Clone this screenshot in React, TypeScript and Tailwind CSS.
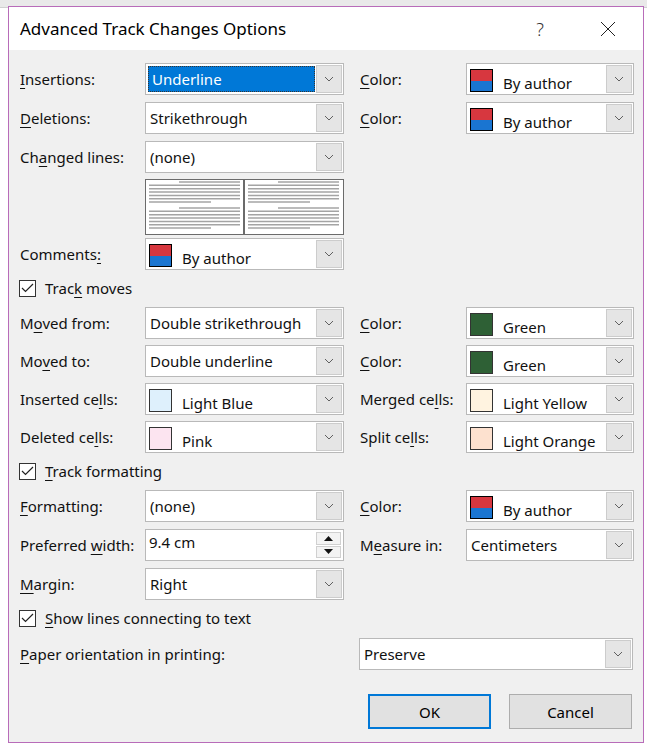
import React from "react";

const swatches: Record<string, string> = {
  green: "#2e6035",
  lightBlue: "#def0fc",
  pink: "#fce4f0",
  lightYellow: "#fff3e0",
  lightOrange: "#fde1cf",
};

function Acc({ t }: { t: string }) {
  const i = t.indexOf("&");
  if (i < 0) return <>{t}</>;
  return (
    <>
      {t.slice(0, i)}
      <span className="underline underline-offset-[3px] decoration-1">{t[i + 1]}</span>
      {t.slice(i + 2)}
    </>
  );
}

function Chevron() {
  return (
    <svg width="10" height="6" viewBox="0 0 10 6" fill="none">
      <polyline points="1,1 5,5 9,1" stroke="#606060" strokeWidth="1" />
    </svg>
  );
}

function DropButton() {
  return (
    <div className="w-[26px] self-stretch m-px flex items-center justify-center bg-[#e5e5e5] border border-[#cccccc]">
      <Chevron />
    </div>
  );
}

function Swatch({ color }: { color?: string }) {
  if (!color) {
    return (
      <div className="w-[23px] h-[23px] ml-[2px] mt-[3px] border border-black flex flex-col shrink-0">
        <div className="flex-1 bg-[#d7373f]" />
        <div className="flex-1 bg-[#1a75d1]" />
      </div>
    );
  }
  return (
    <div
      className="w-[23px] h-[23px] ml-[2px] mt-[3px] border border-[#333] shrink-0"
      style={{ backgroundColor: color }}
    />
  );
}

function Combo({
  value,
  w,
  selected,
  swatch,
  author,
}: {
  value: string;
  w: string;
  selected?: boolean;
  swatch?: string;
  author?: boolean;
}) {
  const hasSwatch = author || swatch;
  return (
    <div className={`${w} h-[32px] flex bg-white border border-[#b9b9b9] shrink-0`}>
      <div className="flex-1 flex items-center pl-[1px] min-w-0">
        {hasSwatch ? (
          <>
            <Swatch color={swatch} />
            <span className="ml-[10px] mt-[7px]">{value}</span>
          </>
        ) : selected ? (
          <div className="flex-1 h-[26px] ml-[1px] flex items-center pl-[3px] bg-[#0078d7] text-white border border-dotted border-[#333]">
            {value}
          </div>
        ) : (
          <span className="pl-[3px]">{value}</span>
        )}
      </div>
      <DropButton />
    </div>
  );
}

function Spinner({ value, w }: { value: string; w: string }) {
  return (
    <div className={`${w} h-[32px] flex bg-white border border-[#b9b9b9] shrink-0`}>
      <div className="flex-1 pl-[3px] pt-[2px]">{value}</div>
      <div className="w-[25px] flex flex-col my-[2px] mr-[2px] gap-px">
        <div className="flex-1 flex items-center justify-center bg-[#f3f3f3] border border-[#d0d0d0]">
          <svg width="9" height="5" viewBox="0 0 9 5">
            <polygon points="0,5 4.5,0 9,5" fill="#111" />
          </svg>
        </div>
        <div className="flex-1 flex items-center justify-center bg-[#f3f3f3] border border-[#d0d0d0]">
          <svg width="9" height="5" viewBox="0 0 9 5">
            <polygon points="0,0 4.5,5 9,0" fill="#111" />
          </svg>
        </div>
      </div>
    </div>
  );
}

function Label({ t, w }: { t: string; w: string }) {
  return (
    <div className={`${w} shrink-0 pt-[6px] self-start`}>
      <Acc t={t} />
    </div>
  );
}

function Check({ t, className }: { t: string; className: string }) {
  return (
    <div className={`flex items-center h-[20px] ${className}`}>
      <div className="w-[17px] h-[17px] bg-white border border-[#333] flex items-center justify-center ml-[-1px]">
        <svg width="13" height="10" viewBox="0 0 13 10" fill="none">
          <polyline points="1,5 4.5,8.5 12,1" stroke="#222" strokeWidth="1.2" />
        </svg>
      </div>
      <span className="ml-[9px]">
        <Acc t={t} />
      </span>
    </div>
  );
}

function Preview() {
  const lines: React.ReactNode[] = [];
  [2, 28].forEach((y0, g) => {
    for (let i = 0; i < 7; i++) {
      const y = y0 + i * 3.35;
      const x1 = i === 0 ? 33 : 3;
      const x2 = i === 6 ? 65 : 94;
      lines.push(<line key={`${g}-${i}`} x1={x1} x2={x2} y1={y} y2={y} stroke="#a4a4a4" strokeWidth="1.5" />);
    }
  });
  const pane = (
    <svg width="97" height="53" viewBox="0 0 97 53" className="bg-white">
      {lines}
    </svg>
  );
  return (
    <div className="w-[199px] h-[56px] flex border border-[#6b6b6b] bg-white">
      {pane}
      <div className="w-[2px] bg-[#6b6b6b]" />
      {pane}
    </div>
  );
}

function Row({
  label,
  children,
  right,
  className,
}: {
  label: string;
  children: React.ReactNode;
  right?: React.ReactNode;
  className: string;
}) {
  return (
    <div className={`flex ${className}`}>
      <Label t={label} w="w-[125px]" />
      {children}
      {right}
    </div>
  );
}

function Right({ label, children }: { label: string; children: React.ReactNode }) {
  return (
    <>
      <div className="w-[16px] shrink-0" />
      <Label t={label} w="w-[106px]" />
      {children}
    </>
  );
}

export default function App() {
  const L = "w-[199px]";
  const R = "w-[168px]";
  return (
    <div className="w-[647px] h-[749px] bg-white relative overflow-hidden font-['Noto_Sans',sans-serif] text-[15px] text-[#111] leading-[20px]">
      <div className="h-[8px] bg-[#e9e9e9] border-b border-[#d0d0d0]" />
      <div className="absolute left-[8px] top-[6px] w-[636px] h-[737px] border border-[#b86cb9] bg-[#f0f0f0] flex flex-col">
        <div className="h-[43px] bg-white flex items-center shrink-0">
          <div className="ml-[11px] text-[17px] text-black flex-1">Advanced Track Changes Options</div>
          <div className="w-[20px] text-center text-[18px] text-[#333] mr-[50px] font-light">?</div>
          <svg width="16" height="16" viewBox="0 0 16 16" className="mr-[27px]">
            <path d="M1 1 L15 15 M15 1 L1 15" stroke="#222" strokeWidth="1" />
          </svg>
        </div>
        <div className="pl-[11px] flex flex-col">
          <Row
            label="&Insertions:"
            className="mt-[13px]"
            right={
              <Right label="&Color:">
                <Combo value="By author" w={R} author />
              </Right>
            }
          >
            <Combo value="Underline" w={L} selected />
          </Row>
          <Row
            label="&Deletions:"
            className="mt-[7px]"
            right={
              <Right label="&Color:">
                <Combo value="By author" w={R} author />
              </Right>
            }
          >
            <Combo value="Strikethrough" w={L} />
          </Row>
          <Row label="Ch&anged lines:" className="mt-[7px]">
            <Combo value="(none)" w={L} />
          </Row>
          <div className="ml-[125px] mt-[6px]">
            <Preview />
          </div>
          <Row label="Comments&:" className="mt-[3px]">
            <Combo value="By author" w={L} author />
          </Row>
          <Check t="Trac&k moves" className="mt-[8px]" />
          <Row
            label="M&oved from:"
            className="mt-[9px]"
            right={
              <Right label="&Color:">
                <Combo value="Green" w={R} swatch={swatches.green} />
              </Right>
            }
          >
            <Combo value="Double strikethrough" w={L} />
          </Row>
          <Row
            label="Mo&ved to:"
            className="mt-[6px]"
            right={
              <Right label="&Color:">
                <Combo value="Green" w={R} swatch={swatches.green} />
              </Right>
            }
          >
            <Combo value="Double underline" w={L} />
          </Row>
          <Row
            label="Inserted ce&lls:"
            className="mt-[6px]"
            right={
              <Right label="Merged ce&lls:">
                <Combo value="Light Yellow" w={R} swatch={swatches.lightYellow} />
              </Right>
            }
          >
            <Combo value="Light Blue" w={L} swatch={swatches.lightBlue} />
          </Row>
          <Row
            label="Deleted ce&lls:"
            className="mt-[6px]"
            right={
              <Right label="Split ce&lls:">
                <Combo value="Light Orange" w={R} swatch={swatches.lightOrange} />
              </Right>
            }
          >
            <Combo value="Pink" w={L} swatch={swatches.pink} />
          </Row>
          <Check t="&Track formatting" className="mt-[8px]" />
          <Row
            label="&Formatting:"
            className="mt-[9px]"
            right={
              <Right label="&Color:">
                <Combo value="By author" w={R} author />
              </Right>
            }
          >
            <Combo value="(none)" w={L} />
          </Row>
          <Row
            label="Preferred &width:"
            className="mt-[7px]"
            right={
              <Right label="M&easure in:">
                <Combo value="Centimeters" w={R} />
              </Right>
            }
          >
            <Spinner value="9.4 cm" w={L} />
          </Row>
          <Row label="&Margin:" className="mt-[7px]">
            <Combo value="Right" w={L} />
          </Row>
          <Check t="&Show lines connecting to text" className="mt-[8px]" />
          <div className="flex mt-[10px]">
            <div className="w-[339px] shrink-0 pt-[6px]">
              <Acc t="&Paper orientation in printing:" />
            </div>
            <Combo value="Preserve" w="w-[274px]" />
          </div>
          <div className="flex justify-end mt-[24px] mr-[11px] gap-[18px]">
            <button className="w-[123px] h-[35px] bg-[#e1e1e1] border-2 border-[#0078d7] text-black">OK</button>
            <button className="w-[123px] h-[35px] bg-[#e1e1e1] border border-[#adadad] text-black">Cancel</button>
          </div>
        </div>
      </div>
    </div>
  );
}
